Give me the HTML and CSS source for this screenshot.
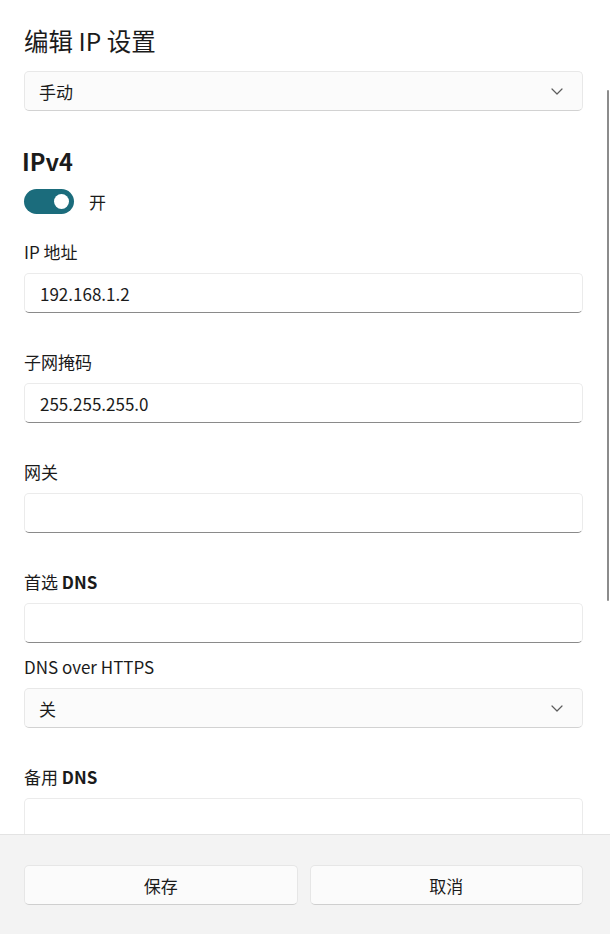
FILE: index.html
```html
<!DOCTYPE html>
<html lang="zh-CN">
<head>
<meta charset="utf-8">
<title>编辑 IP 设置</title>
<link rel="stylesheet" href="styles.css">
</head>
<body>
<div class="dialog">
  <div class="content">
    <h1 class="title">编辑 IP 设置</h1>
    <div class="select"><span>手动</span><svg class="chev" width="12" height="7" viewBox="0 0 12 7"><path d="M1 1 L6 6 L11 1" fill="none" stroke="#5c5c5c" stroke-width="1.2" stroke-linecap="round" stroke-linejoin="round"/></svg></div>

    <h2 class="section">IPv4</h2>
    <div class="toggle-row">
      <span class="toggle"><span class="knob"></span></span>
      <span class="toggle-label">开</span>
    </div>

    <label class="label first">IP 地址</label>
    <div class="textbox">192.168.1.2</div>

    <label class="label">子网掩码</label>
    <div class="textbox">255.255.255.0</div>

    <label class="label">网关</label>
    <div class="textbox"></div>

    <label class="label">首选 <b>DNS</b></label>
    <div class="textbox"></div>

    <label class="label tight">DNS over HTTPS</label>
    <div class="select"><span>关</span><svg class="chev" width="12" height="7" viewBox="0 0 12 7"><path d="M1 1 L6 6 L11 1" fill="none" stroke="#5c5c5c" stroke-width="1.2" stroke-linecap="round" stroke-linejoin="round"/></svg></div>

    <label class="label">备用 <b>DNS</b></label>
    <div class="textbox"></div>

    <div class="scrollthumb"></div>
  </div>
  <div class="footer">
    <button class="btn">保存</button>
    <button class="btn">取消</button>
  </div>
</div>
</body>
</html>
```

FILE: styles.css
```css
* { box-sizing: border-box; }
html, body { margin: 0; padding: 0; }
body {
  width: 610px;
  height: 934px;
  overflow: hidden;
  background: #ffffff;
  color: #1b1b1b;
  font-family: "Noto Sans CJK SC", "Noto Sans", sans-serif;
  font-size: 17px;
}
.dialog {
  display: flex;
  flex-direction: column;
  height: 934px;
}
.content {
  position: relative;
  height: 834px;
  overflow: hidden;
  padding: 24px 27px 0 24px;
  display: flex;
  flex-direction: column;
  background: #ffffff;
}
.title {
  margin: 0;
  font-size: 24.5px;
  font-weight: 400;
  line-height: 34px;
  height: 34px;
}
.select {
  margin-top: 13px;
  height: 40px;
  flex: none;
  border: 1px solid #e8e8e8;
  border-bottom-color: #d2d2d2;
  border-radius: 5px;
  background: #fbfbfb;
  display: flex;
  align-items: center;
  justify-content: space-between;
  padding: 0 19px 0 14px;
  font-size: 17px;
}
.chev { display: block; }
.section {
  margin: 33px 0 0 -2px;
  font-size: 23.5px;
  font-weight: 600;
  line-height: 34px;
  height: 34px;
}
.toggle-row {
  margin-top: 11px;
  display: flex;
  align-items: center;
  gap: 15px;
  height: 25px;
}
.toggle {
  width: 50px;
  height: 25px;
  border-radius: 13px;
  background: #1b6c7c;
  display: flex;
  align-items: center;
  justify-content: flex-end;
  padding-right: 5px;
}
.knob {
  width: 15px;
  height: 15px;
  border-radius: 50%;
  background: #ffffff;
}
.toggle-label { font-size: 17px; line-height: 25px; }
.label {
  display: block;
  margin-top: 37px;
  line-height: 24px;
  height: 24px;
  font-size: 17px;
}
.label b { font-weight: 600; }
.label.first { margin-top: 26px; }
.label.tight { margin-top: 12px; }
.label + .textbox, .label + .select { margin-top: 9px; }
.textbox {
  height: 40px;
  flex: none;
  border: 1px solid #ebebeb;
  border-bottom: 1px solid #8a8a8a;
  border-radius: 5px;
  background: #ffffff;
  padding: 0 15px;
  display: flex;
  align-items: center;
  font-size: 17px;
}
.scrollthumb {
  position: absolute;
  right: 1px;
  top: 90px;
  width: 2px;
  height: 511px;
  border-radius: 1px;
  background: #8c8c8c;
}
.footer {
  height: 100px;
  flex: none;
  background: #f3f3f3;
  border-top: 1px solid #e3e3e3;
  padding: 30px 27px 0 24px;
  display: grid;
  grid-template-columns: 1fr 1fr;
  gap: 12px;
  align-items: start;
}
.btn {
  height: 40px;
  border: 1px solid #e6e6e6;
  border-bottom-color: #cfcfcf;
  border-radius: 5px;
  background: #fbfbfb;
  color: #1b1b1b;
  font-family: inherit;
  font-size: 17px;
  padding: 0;
}
```
